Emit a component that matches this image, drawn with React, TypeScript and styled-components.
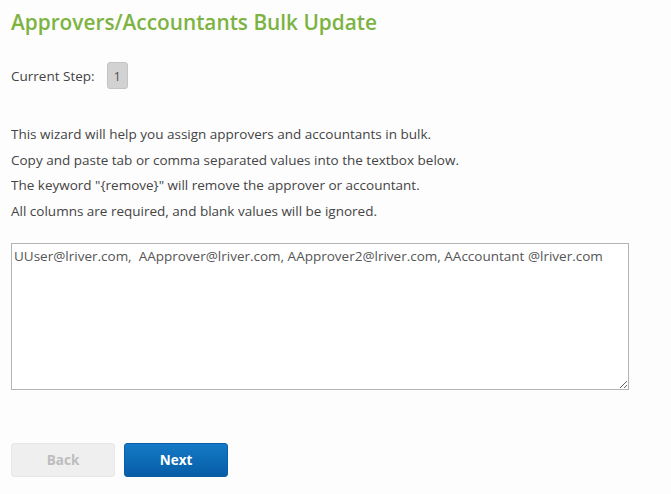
import React from 'react';
import styled, {createGlobalStyle} from "styled-components";

const GlobalStyle = createGlobalStyle`
    body {
        margin: 0;
        background: #fdfdfd;
        font-family: 'Open Sans', 'Liberation Sans', sans-serif;
    }
`;

const PageWrapper = styled.div`
    padding: 8px 11px 0 11px;
    width: 617px;
`;

const Title = styled.h1`
    margin: 0;
    font-size: 20.8px;
    font-weight: 600;
    line-height: 28px;
    color: #7cb342;
`;

const StepRow = styled.div`
    display: flex;
    align-items: center;
    gap: 12px;
    margin-top: 26px;
    font-size: 13.5px;
    color: #444;
`;

const StepBadge = styled.span`
    display: inline-flex;
    align-items: center;
    justify-content: center;
    width: 19px;
    height: 25px;
    background: #d2d2d2;
    border: 1px solid #c4c4c4;
    border-radius: 3px;
    color: #555;
    font-size: 13px;
`;

const Intro = styled.div`
    margin-top: 33px;
    font-size: 13.5px;
    line-height: 25.7px;
    color: #444;
`;

const BulkInput = styled.textarea`
    display: block;
    box-sizing: border-box;
    width: 618px;
    height: 147px;
    margin-top: 18px;
    padding: 3px 2px;
    border: 1px solid #b4b4b4;
    border-radius: 0;
    background: #fff;
    font-family: 'Open Sans', 'Liberation Sans', sans-serif;
    font-size: 13.5px;
    line-height: 19px;
    color: #555;
    outline: none;
`;

const ButtonRow = styled.div`
    display: flex;
    gap: 9px;
    margin-top: 53px;
`;

const WizardButton = styled.button<{ $primary?: boolean }>`
    width: 104px;
    height: 34px;
    border-radius: 3px;
    font-family: 'Open Sans', 'Liberation Sans', sans-serif;
    font-size: 13.5px;
    font-weight: 700;
    border: 1px solid ${p => p.$primary ? '#0a5ea6' : '#e8e8e8'};
    color: ${p => p.$primary ? '#fff' : '#bdbdbd'};
    background: ${p => p.$primary
            ? 'linear-gradient(#1479c6, #075da6)'
            : '#efefef'};
`;

const App = () => {
  return (
    <PageWrapper>
      <GlobalStyle/>
      <Title>Approvers/Accountants Bulk Update</Title>
      <StepRow>
        <span>Current Step:</span>
        <StepBadge>1</StepBadge>
      </StepRow>
      <Intro>
        <div>This wizard will help you assign approvers and accountants in bulk.</div>
        <div>Copy and paste tab or comma separated values into the textbox below.</div>
        <div>The keyword "{'{remove}'}" will remove the approver or accountant.</div>
        <div>All columns are required, and blank values will be ignored.</div>
      </Intro>
      <BulkInput
        defaultValue={"UUser@lriver.com,  AApprover@lriver.com, AApprover2@lriver.com, AAccountant @lriver.com"}
      />
      <ButtonRow>
        <WizardButton disabled>Back</WizardButton>
        <WizardButton $primary>Next</WizardButton>
      </ButtonRow>
    </PageWrapper>
  );
};

export default App;
